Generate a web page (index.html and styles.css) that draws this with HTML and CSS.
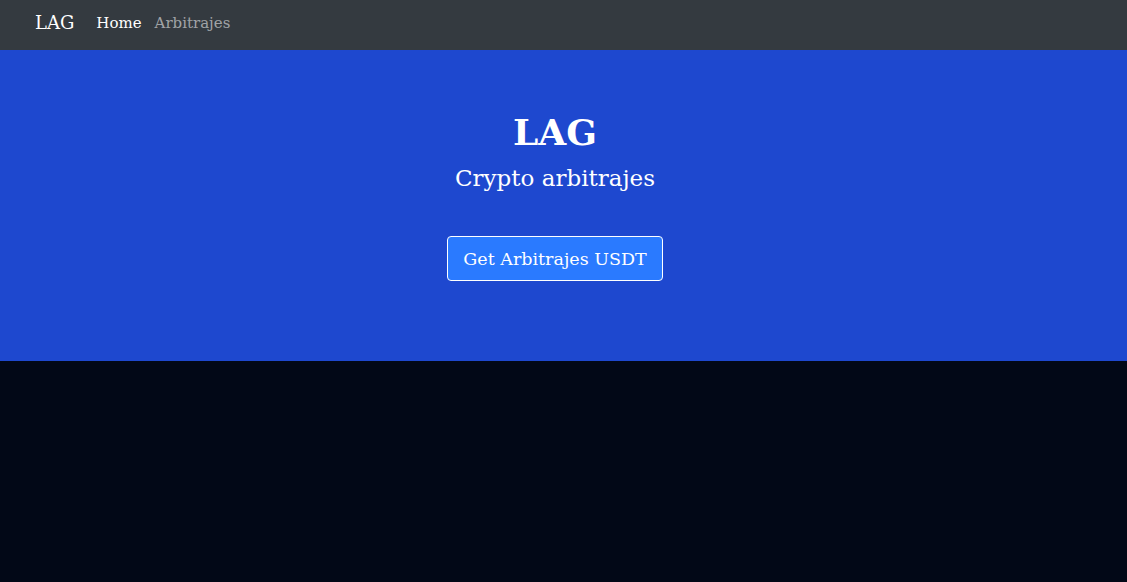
FILE: index.html
```html
<!DOCTYPE html>
<html lang="es">
<head>
<meta charset="utf-8">
<title>LAG</title>
<link rel="stylesheet" href="styles.css">
</head>
<body>
<nav class="navbar">
  <a class="brand" href="#">LAG</a>
  <ul class="nav-links">
    <li><a class="nav-link active" href="#">Home</a></li>
    <li><a class="nav-link" href="#">Arbitrajes</a></li>
  </ul>
</nav>
<section class="hero">
  <h1 class="hero-title">LAG</h1>
  <p class="hero-sub">Crypto arbitrajes</p>
  <a class="btn" href="#">Get Arbitrajes USDT</a>
</section>
<main class="content"></main>
</body>
</html>
```
FILE: styles.css
```css
html, body {
  margin: 0;
  padding: 0;
}
body {
  background: #020817;
  font-family: "DejaVu Serif", "Liberation Serif", serif;
  min-height: 582px;
}
.navbar {
  height: 50px;
  box-sizing: border-box;
  background: #343a40;
  display: flex;
  align-items: center;
  padding: 0 0 6px 35px;
}
.brand {
  color: #fff;
  text-decoration: none;
  font-size: 18px;
  margin-right: 22px;
}
.nav-links {
  list-style: none;
  display: flex;
  gap: 13px;
  margin: 0;
  padding: 0;
}
.nav-link {
  color: rgba(255,255,255,0.55);
  text-decoration: none;
  font-size: 15px;
}
.nav-link.active {
  color: #fff;
}
.hero {
  height: 311px;
  box-sizing: border-box;
  background: #1e48cf;
  color: #fff;
  display: flex;
  flex-direction: column;
  align-items: center;
  padding: 60px 17px 0 0;
}
.hero-title {
  margin: 0;
  font-size: 36px;
  line-height: 44px;
  font-weight: bold;
}
.hero-sub {
  margin: 9px 0 0;
  font-size: 23px;
  line-height: 30px;
}
.btn {
  margin-top: 43px;
  display: inline-flex;
  align-items: center;
  justify-content: center;
  width: 216px;
  height: 45px;
  box-sizing: border-box;
  border: 1px solid #ffffff;
  border-radius: 4px;
  background: #2a7aff;
  color: #fff;
  text-decoration: none;
  font-size: 17.5px;
}
```
